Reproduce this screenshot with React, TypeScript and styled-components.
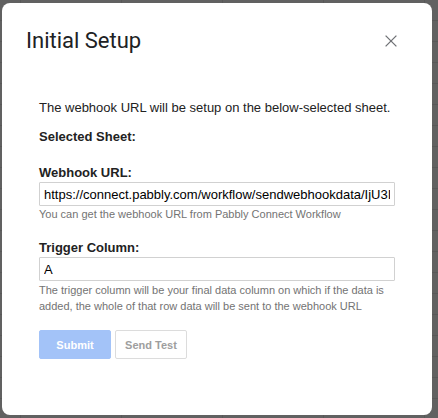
import React from 'react'
import styled, { createGlobalStyle } from 'styled-components'

const GlobalStyle = createGlobalStyle`
  html, body {
    margin: 0;
    padding: 0;
  }

  body {
    width: 438px;
    height: 418px;
    overflow: hidden;
    background-color: #616161;
    background-image:
      linear-gradient(to right, #585858 1px, transparent 1px),
      linear-gradient(to bottom, #585858 1px, transparent 1px);
    background-size: 101px 21px;
    background-position: 20px 20px;
  }
`

const Dialog = styled.div`
  box-sizing: border-box;
  width: 430px;
  height: 412px;
  margin: 3px 0 0 2px;
  background: #fff;
  border-radius: 8px;
  display: flex;
  flex-direction: column;
`

const Header = styled.div`
  display: flex;
  align-items: center;
  justify-content: space-between;
  padding: 24px 31px 0 24px;
`

const Title = styled.h1`
  margin: 0;
  font-family: Roboto, 'Open Sans', sans-serif;
  font-size: 22px;
  font-weight: 400;
  line-height: 28px;
  color: #202124;
`

const CloseButton = styled.button`
  display: flex;
  align-items: center;
  justify-content: center;
  width: 20px;
  height: 20px;
  padding: 0;
  border: 0;
  background: none;
  color: #6f7175;
  cursor: pointer;
`

const Form = styled.div`
  display: flex;
  flex-direction: column;
  padding: 45px 37px 0;
  font-family: 'Liberation Sans', Arial, sans-serif;
  font-size: 13px;
  line-height: 15px;
  color: #222;
`

const Intro = styled.p`
  margin: 0;
`

const Label = styled.div<{ $gap: number }>`
  margin-top: ${(p) => p.$gap}px;
  font-weight: 700;
`

const Input = styled.input`
  box-sizing: border-box;
  width: 100%;
  height: 24px;
  margin-top: 2px;
  padding: 0 4px;
  border: 1px solid #d1d1d1;
  border-radius: 1px;
  font-family: 'Liberation Sans', Arial, sans-serif;
  font-size: 13px;
  color: #000;
  outline: none;
`

const Hint = styled.div<{ $lineHeight: number; $gap: number }>`
  margin-top: ${(p) => p.$gap}px;
  font-size: 11px;
  line-height: ${(p) => p.$lineHeight}px;
  color: #737373;
`

const Actions = styled.div`
  display: flex;
  gap: 4px;
  margin-top: 16px;
`

const Button = styled.button<{ $primary?: boolean }>`
  box-sizing: border-box;
  min-width: 72px;
  height: 29px;
  padding: 0 8px;
  border: 1px solid ${(p) => (p.$primary ? '#a3c3f8' : '#dcdcdc')};
  border-radius: 2px;
  background: ${(p) => (p.$primary ? '#a3c3f8' : '#fff')};
  color: ${(p) => (p.$primary ? '#fff' : '#9e9e9e')};
  font-family: 'Liberation Sans', Arial, sans-serif;
  font-size: 11px;
  font-weight: 700;
`

// thin two-stroke cross for the dialog's close control
const CloseIcon = () => (
  <svg width="12" height="12" viewBox="0 0 12 12" fill="none" stroke="currentColor" strokeWidth="1.3">
    <path d="M0.6 0.6L11.4 11.4M11.4 0.6L0.6 11.4" />
  </svg>
)

export default function App() {
  return (
    <>
      <GlobalStyle />
      <Dialog>
        <Header>
          <Title>Initial Setup</Title>
          <CloseButton aria-label="Close">
            <CloseIcon />
          </CloseButton>
        </Header>
        <Form>
          <Intro>The webhook URL will be setup on the below-selected sheet.</Intro>
          <Label $gap={14}>Selected Sheet:</Label>
          <Label $gap={21}>Webhook URL:</Label>
          <Input
            readOnly
            value="https://connect.pabbly.com/workflow/sendwebhookdata/IjU3IjY0MDYzNDA0MzY1MjZhNTUzMzUxMzQi_pc"
          />
          <Hint $lineHeight={13} $gap={2}>
            You can get the webhook URL from Pabbly Connect Workflow
          </Hint>
          <Label $gap={19}>Trigger Column:</Label>
          <Input readOnly value="A" />
          <Hint $lineHeight={16} $gap={1}>
            The trigger column will be your final data column on which if the data is added, the
            whole of that row data will be sent to the webhook URL
          </Hint>
          <Actions>
            <Button $primary disabled>
              Submit
            </Button>
            <Button disabled>Send Test</Button>
          </Actions>
        </Form>
      </Dialog>
    </>
  )
}
